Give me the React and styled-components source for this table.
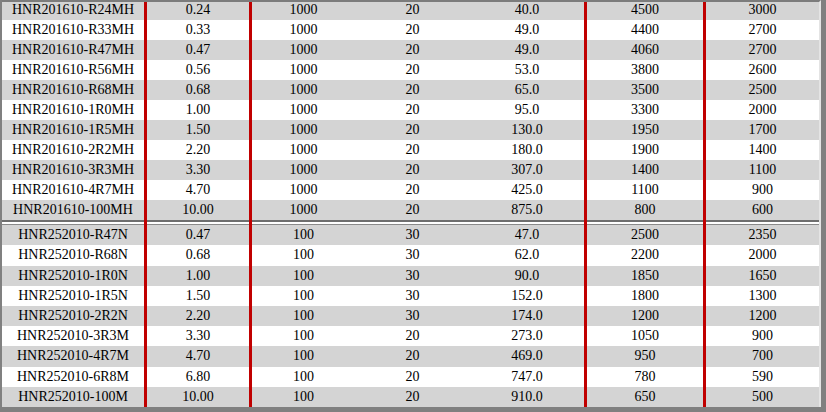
import React from "react";
import styled, { createGlobalStyle } from "styled-components";

const Global = createGlobalStyle`
  html, body { margin: 0; padding: 0; background: #808080; }
  body { width: 826px; height: 412px; overflow: hidden; }
`;

const Page = styled.div`
  padding: 0 5px 0 2px;
  font-family: "Liberation Serif", "Times New Roman", serif;
  font-size: 14px;
  color: #000;
`;

const Table = styled.div`
  display: flex;
  flex-direction: column;
  border-right: 2px solid #e4e4e4;
  border-top: 2px solid #7c7c7c;
  border-bottom: 2px solid #6e6e6e;
`;

const COLS = "145px 105px 103px 115px 117px 119px 113px";
const RED = [true, true, false, false, true, true, false];

const Row = styled.div`
  display: grid;
  grid-template-columns: ${COLS};
  height: ${(p) => p.$h}px;
  line-height: ${(p) => p.$lh}px;
  background: ${(p) => (p.$shade ? "#d4d4d4" : "#ffffff")};
`;

const Cell = styled.div`
  box-sizing: border-box;
  text-align: center;
  white-space: nowrap;
  border-right: ${(p) => (p.$red ? "3px solid #c00000" : "0")};
`;

const Separator = styled.div`
  display: grid;
  grid-template-columns: ${COLS};
  height: 5px;
  background: linear-gradient(
    to bottom,
    #6e6e6e 0,
    #6e6e6e 2px,
    #ffffff 2px,
    #ffffff 4px,
    #8a8a8a 4px,
    #8a8a8a 5px
  );
`;

const SepCell = styled.div`
  box-sizing: border-box;
  border-right: ${(p) => (p.$red ? "3px solid #c00000" : "0")};
`;

const group1 = [
  ["HNR201610-R24MH", "0.24", "1000", "20", "40.0", "4500", "3000"],
  ["HNR201610-R33MH", "0.33", "1000", "20", "49.0", "4400", "2700"],
  ["HNR201610-R47MH", "0.47", "1000", "20", "49.0", "4060", "2700"],
  ["HNR201610-R56MH", "0.56", "1000", "20", "53.0", "3800", "2600"],
  ["HNR201610-R68MH", "0.68", "1000", "20", "65.0", "3500", "2500"],
  ["HNR201610-1R0MH", "1.00", "1000", "20", "95.0", "3300", "2000"],
  ["HNR201610-1R5MH", "1.50", "1000", "20", "130.0", "1950", "1700"],
  ["HNR201610-2R2MH", "2.20", "1000", "20", "180.0", "1900", "1400"],
  ["HNR201610-3R3MH", "3.30", "1000", "20", "307.0", "1400", "1100"],
  ["HNR201610-4R7MH", "4.70", "1000", "20", "425.0", "1100", "900"],
  ["HNR201610-100MH", "10.00", "1000", "20", "875.0", "800", "600"],
];

const group2 = [
  ["HNR252010-R47N", "0.47", "100", "30", "47.0", "2500", "2350"],
  ["HNR252010-R68N", "0.68", "100", "30", "62.0", "2200", "2000"],
  ["HNR252010-1R0N", "1.00", "100", "30", "90.0", "1850", "1650"],
  ["HNR252010-1R5N", "1.50", "100", "30", "152.0", "1800", "1300"],
  ["HNR252010-2R2N", "2.20", "100", "30", "174.0", "1200", "1200"],
  ["HNR252010-3R3M", "3.30", "100", "20", "273.0", "1050", "900"],
  ["HNR252010-4R7M", "4.70", "100", "20", "469.0", "950", "700"],
  ["HNR252010-6R8M", "6.80", "100", "20", "747.0", "780", "590"],
  ["HNR252010-100M", "10.00", "100", "20", "910.0", "650", "500"],
];

const g2Heights = [20, 21, 20, 20, 20, 20, 21, 20, 20];

function DataRow({ cells, shade, h, lh }) {
  return (
    <Row $shade={shade} $h={h} $lh={lh}>
      {cells.map((c, i) => (
        <Cell key={i} $red={RED[i]}>
          {c}
        </Cell>
      ))}
    </Row>
  );
}

export default function App() {
  return (
    <Page>
      <Global />
      <Table style={{ borderBottom: "0" }}>
        {group1.map((r, i) => (
          <DataRow
            key={r[0]}
            cells={r}
            shade={i % 2 === 0}
            h={i === 0 ? 18 : 20}
            lh={i === 0 ? 16 : 20}
          />
        ))}
        <Separator>
          {RED.map((red, i) => (
            <SepCell key={i} $red={red} />
          ))}
        </Separator>
        {group2.map((r, i) => (
          <DataRow
            key={r[0]}
            cells={r}
            shade={i % 2 === 0}
            h={g2Heights[i]}
            lh={g2Heights[i] - 1}
          />
        ))}
      </Table>
    </Page>
  );
}
